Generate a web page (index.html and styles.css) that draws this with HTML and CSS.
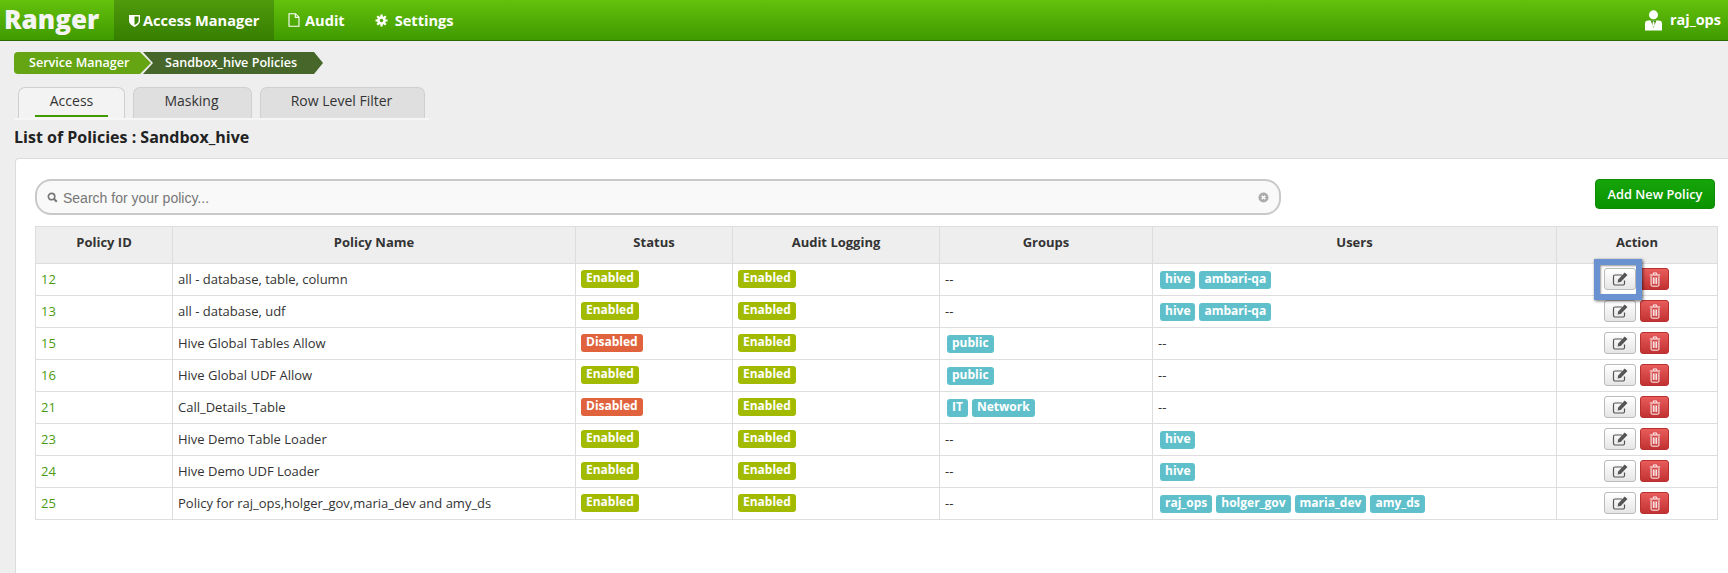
FILE: index.html
```html
<!DOCTYPE html>
<html lang="en">
<head>
<meta charset="utf-8">
<title>Ranger</title>
<link rel="stylesheet" href="styles.css">
</head>
<body>
<svg class="defs" width="0" height="0">
  <symbol id="i-edit" viewBox="0 0 16 16">
    <path d="M12.500 9.500v3a1.500 1.500 0 0 1-1.500 1.500H3a1.500 1.500 0 0 1-1.500-1.500v-7A1.500 1.500 0 0 1 3 4h7" fill="none" stroke="#555" stroke-width="1.200"/>
    <path d="M5.500 11.500l.7-3L12.700 1.500l2.800 2.600-6.800 6.800z" fill="#555"/>
  </symbol>
  <symbol id="i-trash" viewBox="0 0 14 18">
    <path d="M5 3V1.200h4V3M.8 3.600h12.400M2.300 5v10.600q0 1.400 1.400 1.400h6.600q1.400 0 1.400-1.400V5M5 6.500v8M7 6.500v8M9 6.500v8" fill="none" stroke="#fff" stroke-width="1.200"/>
  </symbol>
</svg>
<header class="topbar">
  <div class="brand">Ranger</div>
  <nav class="nav">
    <a class="nav-item active"><svg class="nav-ico shield" viewBox="0 0 12 14"><path d="M0 1h12v6c0 3.500-3 5.500-6 7-3-1.500-6-3.500-6-7z" fill="#fff"/><path d="M6 2.500h4.500V7c0 2.500-2.500 4-4.500 5z" fill="#3f8a04"/></svg>Access Manager</a>
    <a class="nav-item"><svg class="nav-ico doc" viewBox="0 0 12 14"><path d="M1 .7h6.500L11 4.200v9.100H1zM7.300 .7v3.700H11" fill="none" stroke="#fff" stroke-width="1.100"/></svg>Audit</a>
    <a class="nav-item"><svg class="nav-ico gear" viewBox="0 0 14 14"><circle cx="7" cy="7" r="3.400" fill="none" stroke="#fff" stroke-width="2.600"/><path d="M7 .5v13M.5 7h13M2.400 2.400l9.200 9.200M11.600 2.400l-9.200 9.200" stroke="#fff" stroke-width="2.400"/><circle cx="7" cy="7" r="1.900" fill="#4fa804"/></svg>Settings</a>
  </nav>
  <div class="user">
    <svg class="user-ico" viewBox="0 0 18 22"><circle cx="9" cy="5" r="4.800" fill="#fff"/><path d="M0 21.500v-7q0-3.500 3.500-3.500h11q3.500 0 3.500 3.500v7z" fill="#fff"/><path d="M6 11l3 8 3-8z" fill="#3f8a04"/><path d="M8.200 12h1.600l.4 4L9 18l-1.200-2z" fill="#fff"/></svg>
    <span>raj_ops</span>
  </div>
</header>

<div class="crumbs">
  <a class="crumb first">Service Manager</a>
  <a class="crumb second">Sandbox_hive Policies</a>
</div>

<div class="tabs">
  <a class="tab on"><span class="tab-label">Access</span></a>
  <a class="tab t-mask"><span class="tab-label">Masking</span></a>
  <a class="tab t-row"><span class="tab-label">Row Level Filter</span></a>
</div>

<h1 class="title">List of Policies : Sandbox_hive</h1>

<main class="panel">
  <div class="toolbar">
    <div class="search">
      <svg class="s-ico" viewBox="0 0 12 12"><circle cx="5" cy="5" r="3.500" fill="none" stroke="#777" stroke-width="1.800"/><path d="M7.700 7.700l3 3" stroke="#777" stroke-width="2.200"/></svg>
      <span class="s-text">Search for your policy...</span>
      <svg class="s-clear" viewBox="0 0 12 12"><circle cx="6" cy="6" r="5.500" fill="#aaa"/><path d="M4 4l4 4M8 4l-4 4" stroke="#fff" stroke-width="1.500"/></svg>
    </div>
    <a class="add">Add New Policy</a>
  </div>

  <table class="grid">
    <colgroup>
      <col class="c-id"><col class="c-name"><col class="c-status"><col class="c-audit"><col class="c-groups"><col class="c-users"><col class="c-action">
    </colgroup>
    <thead>
      <tr><th>Policy ID</th><th>Policy Name</th><th>Status</th><th>Audit Logging</th><th>Groups</th><th>Users</th><th>Action</th></tr>
    </thead>
    <tbody>
      <tr>
        <td class="pid">12</td><td>all - database, table, column</td>
        <td><span class="b ok">Enabled</span></td><td><span class="b ok">Enabled</span></td>
        <td>--</td>
        <td><span class="b info">hive</span><span class="b info">ambari-qa</span></td>
        <td class="act"><div class="btns"><a class="btn-e"><svg class="e-ico"><use href="#i-edit"/></svg></a><a class="btn-d"><svg class="d-ico"><use href="#i-trash"/></svg></a><span class="focus"></span></div></td>
      </tr>
      <tr>
        <td class="pid">13</td><td>all - database, udf</td>
        <td><span class="b ok">Enabled</span></td><td><span class="b ok">Enabled</span></td>
        <td>--</td>
        <td><span class="b info">hive</span><span class="b info">ambari-qa</span></td>
        <td class="act"><div class="btns"><a class="btn-e"><svg class="e-ico"><use href="#i-edit"/></svg></a><a class="btn-d"><svg class="d-ico"><use href="#i-trash"/></svg></a></div></td>
      </tr>
      <tr>
        <td class="pid">15</td><td>Hive Global Tables Allow</td>
        <td><span class="b bad">Disabled</span></td><td><span class="b ok">Enabled</span></td>
        <td><span class="b info">public</span></td>
        <td>--</td>
        <td class="act"><div class="btns"><a class="btn-e"><svg class="e-ico"><use href="#i-edit"/></svg></a><a class="btn-d"><svg class="d-ico"><use href="#i-trash"/></svg></a></div></td>
      </tr>
      <tr>
        <td class="pid">16</td><td>Hive Global UDF Allow</td>
        <td><span class="b ok">Enabled</span></td><td><span class="b ok">Enabled</span></td>
        <td><span class="b info">public</span></td>
        <td>--</td>
        <td class="act"><div class="btns"><a class="btn-e"><svg class="e-ico"><use href="#i-edit"/></svg></a><a class="btn-d"><svg class="d-ico"><use href="#i-trash"/></svg></a></div></td>
      </tr>
      <tr>
        <td class="pid">21</td><td>Call_Details_Table</td>
        <td><span class="b bad">Disabled</span></td><td><span class="b ok">Enabled</span></td>
        <td><span class="b info">IT</span><span class="b info">Network</span></td>
        <td>--</td>
        <td class="act"><div class="btns"><a class="btn-e"><svg class="e-ico"><use href="#i-edit"/></svg></a><a class="btn-d"><svg class="d-ico"><use href="#i-trash"/></svg></a></div></td>
      </tr>
      <tr>
        <td class="pid">23</td><td>Hive Demo Table Loader</td>
        <td><span class="b ok">Enabled</span></td><td><span class="b ok">Enabled</span></td>
        <td>--</td>
        <td><span class="b info">hive</span></td>
        <td class="act"><div class="btns"><a class="btn-e"><svg class="e-ico"><use href="#i-edit"/></svg></a><a class="btn-d"><svg class="d-ico"><use href="#i-trash"/></svg></a></div></td>
      </tr>
      <tr>
        <td class="pid">24</td><td>Hive Demo UDF Loader</td>
        <td><span class="b ok">Enabled</span></td><td><span class="b ok">Enabled</span></td>
        <td>--</td>
        <td><span class="b info">hive</span></td>
        <td class="act"><div class="btns"><a class="btn-e"><svg class="e-ico"><use href="#i-edit"/></svg></a><a class="btn-d"><svg class="d-ico"><use href="#i-trash"/></svg></a></div></td>
      </tr>
      <tr>
        <td class="pid">25</td><td>Policy for raj_ops,holger_gov,maria_dev and amy_ds</td>
        <td><span class="b ok">Enabled</span></td><td><span class="b ok">Enabled</span></td>
        <td>--</td>
        <td><span class="b info">raj_ops</span><span class="b info">holger_gov</span><span class="b info">maria_dev</span><span class="b info">amy_ds</span></td>
        <td class="act"><div class="btns"><a class="btn-e"><svg class="e-ico"><use href="#i-edit"/></svg></a><a class="btn-d"><svg class="d-ico"><use href="#i-trash"/></svg></a></div></td>
      </tr>
    </tbody>
  </table>
</main>
</body>
</html>
```
FILE: styles.css
```css
* { box-sizing: border-box; }
html, body { height: 100%; }
body {
  margin: 0;
  background: #eeeeee;
  color: #333;
  font: 13px/18px "Open Sans", sans-serif;
  overflow: hidden;
  display: flex;
  flex-direction: column;
}
.defs { position: absolute; }

/* top bar */
.topbar {
  height: 41px;
  flex: none;
  display: flex;
  align-items: stretch;
  color: #fff;
  background: linear-gradient(#64c10c, #3f9a00);
  border-bottom: 1px solid #2a6a00;
}
.brand {
  width: 114px;
  padding-left: 4px;
  font-size: 26px;
  font-weight: 800;
  line-height: 39px;
  color: #f4f4f4;
}
.nav { display: flex; }
.nav-item {
  display: flex;
  align-items: center;
  font-size: 14.600px;
  font-weight: 700;
  padding: 0 14px;
}
.nav-item.active {
  width: 160px;
  padding-left: 15px;
  background: linear-gradient(#4f9a0c, #377f00);
}
.nav-ico { flex: none; }
.shield { width: 11px; height: 13px; margin-right: 3px; }
.doc { width: 12px; height: 14px; margin-right: 5px; }
.gear { width: 13px; height: 13px; margin-right: 7px; margin-left: 2px; }
.user {
  margin-left: auto;
  padding-right: 7px;
  display: flex;
  align-items: center;
  gap: 8px;
  font-size: 14.500px;
  font-weight: 700;
}
.user-ico { width: 17px; height: 21px; }

/* breadcrumb */
.crumbs {
  flex: none;
  margin: 11px 0 0 14px;
  display: flex;
  height: 22px;
  font-size: 12.600px;
  font-weight: 600;
  line-height: 22px;
  color: #fff;
}
.crumb { display: block; }
.first {
  width: 137px;
  padding-left: 15px;
  background: #65a513;
  border-radius: 4px 0 0 4px;
  clip-path: polygon(0 0, 126px 0, 137px 11px, 126px 22px, 0 22px);
}
.second {
  width: 180px;
  margin-left: -8px;
  padding-left: 22px;
  background: #46662a;
  clip-path: polygon(0 0, 171px 0, 180px 11px, 171px 22px, 0 22px, 10px 11px);
}

/* tabs */
.tabs {
  flex: none;
  margin: 13px 0 0 14px;
  width: 415px;
  height: 33px;
  padding-left: 4px;
  display: flex;
  gap: 8px;
  border-bottom: 2px solid #f6f6f6;
}
.tab {
  display: block;
  height: 31px;
  text-align: center;
  font-size: 14px;
  line-height: 26px;
  background: #dfdfdf;
  border: 1px solid #cfcfcf;
  border-bottom: 0;
  border-radius: 7px 7px 0 0;
  color: #333;
}
.tab.on { width: 107px; background: #f3f3f3; }
.tab.on .tab-label {
  display: inline-block;
  width: 73px;
  height: 29px;
  border-bottom: 2px solid #3f9a00;
}
.t-mask { width: 119px; padding-right: 2px; }
.t-row { width: 165px; padding-right: 2px; }

.title {
  flex: none;
  margin: 5px 0 0 14px;
  font-size: 16px;
  font-weight: 700;
  line-height: 24px;
  color: #222;
}

/* panel */
.panel {
  flex: 1;
  margin: 9px 0 0 15px;
  background: #fff;
  border: 1px solid #dcdcdc;
  border-width: 1px 0 0 1px;
  border-radius: 4px 0 0 0;
  padding: 20px 12px 0 19px;
}
.toolbar {
  display: flex;
  justify-content: space-between;
  height: 47px;
}
.search {
  width: 1246px;
  height: 36px;
  display: flex;
  align-items: center;
  padding: 1px 10px 0;
  background: #f9f9f9;
  border: 2px solid #c9c9c9;
  border-radius: 16px;
  font: 14px "Liberation Sans", Arial, sans-serif;
  color: #777;
}
.s-ico { width: 11px; height: 11px; margin-right: 5px; }
.s-text { flex: 1; }
.s-clear { width: 11px; height: 11px; }
.add {
  width: 120px;
  height: 30px;
  margin-right: 1px;
  text-align: center;
  font-size: 12.800px;
  font-weight: 600;
  line-height: 28px;
  color: #fff;
  background: linear-gradient(#16a50a, #0a9300);
  border: 1px solid #0e8a05;
  border-radius: 4px;
}

/* table */
.grid {
  table-layout: fixed;
  width: 1682px;
  border-collapse: collapse;
}
.c-id { width: 137px; }
.c-name { width: 403px; }
.c-status { width: 157px; }
.c-audit { width: 207px; }
.c-groups { width: 213px; }
.c-users { width: 404px; }
.c-action { width: 161px; }
.grid th, .grid td { border: 1px solid #dddddd; }
.grid th {
  height: 37px;
  padding: 0 0 7px;
  text-align: center;
  background: #eeeeee;
  font-size: 13px;
  font-weight: 700;
  color: #333;
}
.grid td {
  height: 32px;
  padding: 6px 5px 0;
  vertical-align: top;
  white-space: nowrap;
}
.pid { color: #4b9a10; }
.b {
  display: inline-block;
  vertical-align: top;
  height: 18px;
  padding: 0 5px;
  font-size: 12px;
  font-weight: 700;
  line-height: 16px;
  color: #fff;
  border-radius: 3px;
}
.ok { background: #a2bb00; }
.bad { background: #e0633e; }
.info { background: #5fc0cb; margin: 1px 4px 0 0; }
.info:first-child { margin-left: 2px; }

.btns {
  position: relative;
  display: flex;
  justify-content: center;
  gap: 4px;
  padding-right: 1px;
  margin-top: -2px;
}
.btn-e, .btn-d {
  display: flex;
  align-items: center;
  justify-content: center;
  height: 22px;
  border-radius: 3px;
}
.btn-e {
  width: 32px;
  background: linear-gradient(#fff, #e6e6e6);
  border: 1px solid #bbb;
}
.btn-d {
  width: 29px;
  background: linear-gradient(#e85c5c, #c33232);
  border: 1px solid #b93030;
}
.e-ico { width: 16px; height: 16px; }
.d-ico { width: 12px; height: 15px; }

/* highlight drawn over the first edit button */
.focus {
  position: absolute;
  z-index: 1;
  left: 32px;
  top: -9px;
  width: 48px;
  height: 41px;
  border: 6px solid #6a92d0;
  box-shadow: 1px 1px 3px rgba(0, 0, 0, .6), inset 1px 1px 2px rgba(0, 0, 0, .4);
}
```
